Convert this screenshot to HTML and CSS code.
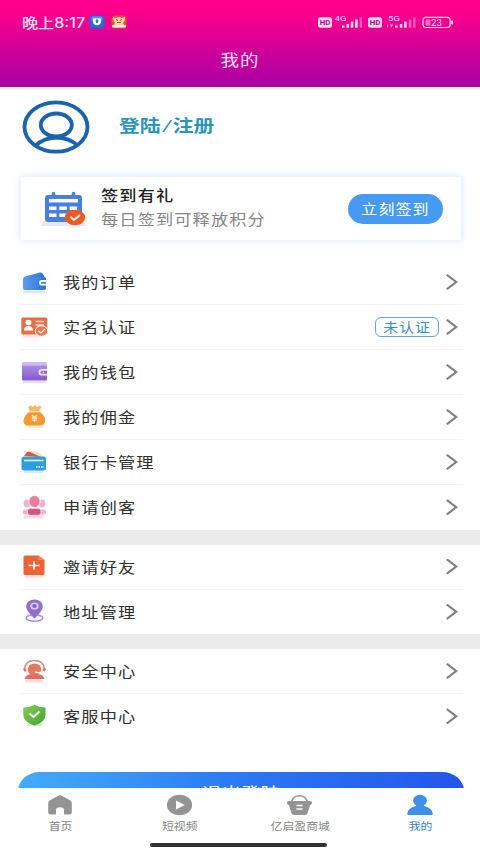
FILE: index.html
```html
<!DOCTYPE html>
<html lang="zh-CN">
<head>
<meta charset="utf-8">
<title>我的</title>
<link rel="stylesheet" href="styles.css">
</head>
<body>
<div class="screen">
  <header class="header">
    <div class="status">
      <div class="status-left">
        <span class="clock">晚上8:17</span>
        <svg class="app" width="16" height="14" viewBox="0 0 16 14"><rect x=".5" y=".5" width="15" height="13" rx="3.5" fill="#2468dc"/><rect x="2.5" y="1.5" width="11" height="5" rx="2" fill="#4aa0f5"/><path d="M4 3.5h8v3a4 3.8 0 0 1-8 0z" fill="#fff"/><path d="M6.8 4.5h2.4v2.2a1.2 1.2 0 0 1-2.4 0z" fill="#2468dc"/></svg>
        <svg class="app" width="16" height="14" viewBox="0 0 16 14"><rect x=".5" y=".5" width="15" height="13" rx="3.5" fill="#e8502f"/><path d="M2 2l3 1 3-1 3 1 3-1-.5 4L12 8l1 2H3l1-2-1.500-2z" fill="#ffd5a8"/><path d="M5 4.500l2 1M11 4.500l-2 1M6 7.500h4" stroke="#c9382c" stroke-width="1"/><rect x="1" y="10" width="14" height="2.500" rx="1" fill="#fff0f0"/></svg>
      </div>
      <svg class="signals" width="138" height="20" viewBox="317 12 138 20">
        <g fill="#ffd9f2">
          <rect x="318" y="17.300" width="14" height="10.400" rx="2.500"/>
          <rect x="368" y="17.300" width="14" height="10.400" rx="2.500"/>
          <rect x="342" y="25.500" width="2.500" height="2.200"/><rect x="346.500" y="24" width="2.500" height="3.700"/><rect x="350.800" y="21.500" width="2.500" height="6.200"/><rect x="355" y="19.500" width="2.700" height="8.200"/><rect x="359.600" y="17.500" width="2.500" height="10.200" opacity=".4"/>
          <rect x="395" y="25.500" width="2.500" height="2.200"/><rect x="399.800" y="24" width="2.500" height="3.700"/><rect x="404.200" y="21.500" width="2.500" height="6.200"/><rect x="408.800" y="19.500" width="2.500" height="8.200" opacity=".45"/><rect x="413" y="17.500" width="2.500" height="10.200" opacity=".4"/>
          <path d="M387 27.500v-3l1.500 1.500M390 24.500h3l-1.500 3z"/>
          <rect x="425.500" y="19.500" width="5" height="6" rx="1" opacity=".5"/>
          <rect x="451.300" y="20.500" width="1.700" height="4" rx=".8"/>
          <text x="334.500" y="21" font-size="8" textLength="12" lengthAdjust="spacingAndGlyphs">4G</text>
          <text x="388" y="21" font-size="8" textLength="12" lengthAdjust="spacingAndGlyphs">5G</text>
          <text x="431" y="25.700" font-size="8.500" textLength="11" lengthAdjust="spacingAndGlyphs">23</text>
        </g>
        <g fill="#b5008c" font-size="7" font-weight="700"><text x="319.700" y="25.100" textLength="10.600" lengthAdjust="spacingAndGlyphs">HD</text><text x="369.700" y="25.100" textLength="10.600" lengthAdjust="spacingAndGlyphs">HD</text></g>
        <rect x="423" y="17.300" width="27.200" height="10.200" rx="3" fill="none" stroke="#ffd9f2" stroke-width="1.200"/>
      </svg>
    </div>
    <h1 class="title">我的</h1>
  </header>

  <main class="content">
    <section class="profile">
      <svg width="68" height="56" viewBox="22 99 68 56" fill="none" stroke="#1a64ad" stroke-width="3.800"><ellipse cx="56" cy="127" rx="31.500" ry="24.700"/><ellipse cx="56.300" cy="125" rx="15.500" ry="11.500"/><path d="M36 145.500Q43.500 138 56 137.500Q69.500 138 77 145"/></svg>
      <span class="login">登陆<i>/</i>注册</span>
    </section>

    <section class="card">
      <svg width="48" height="42" viewBox="40 188 48 42">
        <path d="M43 221l-2 5h45l-2-5z" fill="#e6e9f5"/>
        <path d="M48 195h31q3 0 3 3v21q0 3-3 3H48q-3 0-3-3v-21q0-3 3-3z" fill="#457fe0"/>
        <path d="M53.500 193.500v4M73.500 193.500v4" stroke="#457fe0" stroke-width="3.500" stroke-linecap="round"/>
        <path d="M49 200.700h29" stroke="#fff" stroke-width="3.500"/>
        <path d="M49 208.200h29M49 215.200h20" stroke="#fff" stroke-width="3.500" stroke-dasharray="7.500 2.800"/>
        <ellipse cx="75" cy="217.500" rx="10.200" ry="7.800" fill="#f0591f"/>
        <path d="M70.500 217l3.500 3 6-5" fill="none" stroke="#fff" stroke-width="2"/>
      </svg>
      <div class="card-text"><b>签到有礼</b><p>每日签到可释放积分</p></div>
      <button class="sign"><span>立刻签到</span></button>
    </section>

    <ul class="menu">
      <li><svg class="ico" viewBox="20 -14 28 28"><defs><linearGradient id="blue" x2="1"><stop stop-color="#5d9bee"/><stop offset="1" stop-color="#2f73d6"/></linearGradient></defs><path d="M23 10h22" stroke="#dce6fa" stroke-width="3"/><path d="M23-3Q23-5 25-5.500L40-9.500Q42-10 43-8L44.500-5 46-4V6Q46 8 44 8H25Q23 8 23 6z" fill="url(#blue)"/><path d="M46-2h-4a3 2.700 0 0 0 0 5.400h4z" fill="#fff"/><path d="M46 0h-4a1 .9 0 0 0 0 1.800h4z" fill="#3b7cdd"/></svg><span>我的订单</span><em></em></li>
      <li><svg class="ico" viewBox="20 -14 28 28"><path d="M23 9h16" stroke="#fbe1d8" stroke-width="3"/><rect x="21.300" y="-9.500" width="26" height="17" rx="1.500" fill="#df7048"/><ellipse cx="28.500" cy="-4.500" rx="3" ry="2.800" fill="#fff"/><path d="M24 3.500q0-4.500 4.500-4.500T33 3.500z" fill="#fff"/><path d="M35.500-5.500h8.500M35.500-2h8.500" stroke="#ffd9c8" stroke-width="1.400"/><ellipse cx="41.500" cy="4" rx="6.300" ry="5.300" fill="#e7794c" stroke="#fff" stroke-width="1"/><path d="M38.500 4l2.500 2 4-4" stroke="#fff" fill="none" stroke-width="1.300"/></svg><span>实名认证</span><strong class="tag"><u>未认证</u></strong><em></em></li>
      <li><svg class="ico" viewBox="20 -14 28 28"><defs><linearGradient id="vio" x2="0" y2="1"><stop stop-color="#aa8ce2"/><stop offset="1" stop-color="#8658cf"/></linearGradient></defs><path d="M23 10h23" stroke="#eadffa" stroke-width="2"/><rect x="22" y="-10" width="25" height="5" rx="1" fill="#cdbdf0"/><rect x="22" y="-6.500" width="25" height="15" rx="1" fill="url(#vio)"/><path d="M47-3h-5a3.200 3 0 0 0 0 6.500h5z" fill="#efe5ff"/><path d="M47-1.300h-5a1.500 1.500 0 0 0 0 3h5z" fill="#925fcc"/><circle cx="43.500" cy=".200" r=".8" fill="#fff"/></svg><span>我的钱包</span><em></em></li>
      <li><svg class="ico" viewBox="20 -14 28 28"><path d="M26 9.500h17" stroke="#fdebcf" stroke-width="3"/><path d="M29-5h11q5 4 5.300 8Q45 8.500 40 8.500H28.500Q23.500 8.500 23.500 3.500 24-1 29-5z" fill="#f09a37"/><path d="M28-10l3-1.500 2 1.500 2-2 2 2 3-1.500 1.500 1.500-3 5h-8z" fill="#f6b963"/><path d="M29-5.300h11" stroke="#fde2ae" stroke-width="1.300"/><path d="M32-2l2.500 2.500L37-2M34.500.500V5M31.800 1h5.400M32 3.200h5" stroke="#ffe8bd" fill="none" stroke-width="1.300"/></svg><span>我的佣金</span><em></em></li>
      <li><svg class="ico" viewBox="20 -14 28 28"><path d="M24 9.500h19" stroke="#d4eefb" stroke-width="3"/><path d="M29-11q13-1 15 7H33z" fill="#fae0d3"/><path d="M24-6l3-4q1-.8 3 0l11 5z" fill="#dd5b3c"/><rect x="21.500" y="-5.500" width="24.500" height="14" rx="2.500" fill="#2f9ee0"/><path d="M24-1.500h19.500" stroke="#d8f3ff" stroke-width="1.600"/><path d="M36 5h8" stroke="#fff" stroke-width="1.400" stroke-dasharray="1.500 1"/></svg><span>银行卡管理</span><em></em></li>
      <li><svg class="ico" viewBox="20 -14 28 28"><path d="M24 10h20" stroke="#f8dbe5" stroke-width="3"/><g fill="#f0b4c6"><ellipse cx="27" cy="-3.500" rx="3.300" ry="4"/><ellipse cx="42" cy="-3.500" rx="3.300" ry="4"/><rect x="23" y="2.500" width="7" height="5" rx="2"/><rect x="39" y="2.500" width="7" height="5" rx="2"/></g><ellipse cx="34.500" cy="-5.500" rx="5.600" ry="6" fill="#ec7e9b" stroke="#fff" stroke-width=".7"/><rect x="27.500" y="1.300" width="13.500" height="7" rx="2.800" fill="#da4f86" stroke="#fff" stroke-width=".7"/></svg><span>申请创客</span><em></em></li>
    </ul>
    <ul class="menu">
      <li><svg class="ico" viewBox="20 -14 28 28"><path d="M25 9.500h18" stroke="#fbe0d6" stroke-width="2.500"/><path d="M25-11.500h13.500l6 4.500V6.500q0 1.500-1.500 1.500H25q-1.500 0-1.500-1.500V-10q0-1.500 1.500-1.500z" fill="#ea6437"/><path d="M38.500-11.500l6 4.500h-6z" fill="#f08a5e"/><path d="M34-5.500v8M28.500-1.500h11" stroke="#fff" stroke-width="1.700"/></svg><span>邀请好友</span><em></em></li>
      <li><svg class="ico" viewBox="20 -14 28 28"><ellipse cx="34.500" cy="6" rx="8.300" ry="3.200" fill="none" stroke="#a48fe0" stroke-width="1.600"/><path d="M34.500-12.500c5 0 8.300 3 8.300 7 0 4-5 8.500-8.300 12-3.300-3.500-8.300-8-8.300-12 0-4 3.300-7 8.300-7z" fill="#926fcd"/><ellipse cx="34.500" cy="-6" rx="4.200" ry="3.600" fill="#dacdf5"/><ellipse cx="34.500" cy="-6" rx="2.300" ry="2" fill="#8961c6"/></svg><span>地址管理</span><em></em></li>
    </ul>
    <ul class="menu last">
      <li><svg class="ico" viewBox="20 -14 28 28"><path d="M25 10h18" stroke="#fae0dd" stroke-width="3"/><path d="M24.500-1.500Q25-10.500 34.500-10.500T44.500-1.500" fill="none" stroke="#db8a79" stroke-width="1.700"/><ellipse cx="34.500" cy="-1.500" rx="6.700" ry="6" fill="#e07a5c"/><path d="M24.500 8q1-4.500 7-5h6q6 .5 7 5z" fill="#e46a68"/><path d="M22.800-2.500h3.500v3h-2zM46.200-2.500h-3.500v3h2z" fill="#d97965"/><path d="M44 .5q-3 2-9 .5" stroke="#fff" stroke-width="1.300" fill="none"/></svg><span>安全中心</span><em></em></li>
      <li><svg class="ico" viewBox="20 -14 28 28"><defs><linearGradient id="grn" x2="1" y2="1"><stop stop-color="#84ce58"/><stop offset="1" stop-color="#43a32e"/></linearGradient></defs><path d="M27 8.500h15" stroke="#d9f0cf" stroke-width="3"/><path d="M34.500-11.500Q39-8.500 45.500-8.500V-1q0 7-11 10.500Q23.300 6 23.300-1v-7.500Q30-8.500 34.500-11.500z" fill="url(#grn)"/><path d="M29.500-2.500l4 3.500 6-5.500" stroke="#fff" stroke-width="2" fill="none"/></svg><span>客服中心</span><em></em></li>
    </ul>
    <button class="logout"><span>退出登陆</span></button>
  </main>

  <nav class="tabs">
    <a><svg width="28" height="24" viewBox="0 0 28 24"><path d="M12.300 1.700Q14 .8 15.700 1.700L24 6.300Q25.800 7.300 25.800 9V18q0 2.500-2.500 2.500H18V16q0-2.800-4-2.800T10 16v4.500H4.700Q2.200 20.500 2.200 18V9Q2.200 7.300 4 6.300z" fill="#949494"/></svg><span>首页</span></a>
    <a><svg width="28" height="24" viewBox="0 0 28 24"><ellipse cx="13.500" cy="11" rx="12.600" ry="10.200" fill="#949494"/><path d="M10 6.500L18.800 11 10 15.500z" fill="#fff"/></svg><span>短视频</span></a>
    <a><svg width="28" height="24" viewBox="0 0 28 24"><path d="M5.500 8Q7 1.700 13.500 1.700T21.500 8" fill="none" stroke="#949494" stroke-width="1.500"/><path d="M2.800 7h21.400q2 0 1.800 2t-2 2.300l-2.500 8Q21 21 19.300 21H7.700Q6 21 5.500 19.300L3 11.300Q1 11 .9 9t1.900-2z" fill="#949494"/><path d="M10.500 11.500h6M10.500 15h6" stroke="#fff" stroke-width="1.500"/></svg><span>亿启盈商城</span></a>
    <a class="on"><svg width="28" height="24" viewBox="0 0 28 24"><ellipse cx="14" cy="6.500" rx="6.900" ry="5.700" fill="#3d8fe8"/><path d="M10 10h8v2q8.500 2 8.800 8 0 1-1 1H2.200q-1 0-1-1 .3-6 8.800-8z" fill="#3d8fe8"/></svg><span>我的</span></a>
    <div class="home"></div>
  </nav>
</div>
</body>
</html>
```
FILE: styles.css
```css
* { box-sizing: border-box; }
body, h1, p, ul { margin: 0; padding: 0; }
body {
  font-family: "Noto Sans", "Noto Sans CJK SC", sans-serif;
  background: #fff;
  color: #2e2e2e;
}
svg { display: block; flex: none; }
svg text { font-family: Roboto, sans-serif; }
button { border: 0; font-family: inherit; padding: 0; }

.screen {
  width: 480px;
  height: 853px;
  display: flex;
  flex-direction: column;
  overflow: hidden;
}

.header {
  height: 87px;
  flex: none;
  background: linear-gradient(#ff008c 0%, #fa008d 15%, #a800a4 100%);
  color: #ffe0f5;
}
.status {
  height: 32px;
  padding: 12px 25px 0 22px;
  display: flex;
  justify-content: space-between;
}
.status-left { display: flex; align-items: center; height: 20px; }
.clock {
  width: 67px;
  font-size: 14px;
  font-weight: 500;
  line-height: 20px;
  white-space: nowrap;
  font-family: Inter, "Noto Sans CJK SC", sans-serif;
  transform: translateY(1px) scaleX(1.15);
  transform-origin: left;
}
.app { margin-right: 6px; }
.title {
  margin-top: 16px;
  text-align: center;
  font-size: 16px;
  line-height: 24px;
  font-weight: 400;
  letter-spacing: 1px;
  transform: scaleX(1.15);
}

.content { flex: 1; min-height: 0; overflow: hidden; }
.profile {
  height: 90px;
  padding: 12px 0 0 22px;
  display: flex;
}
.login {
  margin: 14px 0 0 29px;
  height: 26px;
  line-height: 26px;
  font-size: 17px;
  font-weight: 700;
  color: #2b94bd;
  white-space: nowrap;
  transform: scaleX(1.22);
  transform-origin: left;
}
.login i { font-weight: 400; padding: 0 2px; }

.card {
  height: 63px;
  margin: 0 19px 20px 21px;
  padding: 0 18px 0 19px;
  display: flex;
  align-items: center;
  box-shadow: 0 0 8px 1px #dfebfa;
}
.card-text { flex: 1; margin: -3px 0 0 13px; }
.card-text b, .card-text p {
  display: block;
  white-space: nowrap;
  letter-spacing: 1px;
  transform: scaleX(1.145);
  transform-origin: left;
  font-size: 15px;
  line-height: 24px;
}
.card-text b { font-weight: 500; color: #222; }
.card-text p { color: #858585; }
.sign {
  width: 95px;
  height: 30px;
  border-radius: 15px;
  background: #479af3;
  color: #fff;
  font-size: 14px;
}
.sign span {
  display: block;
  margin-top: -2px;
  letter-spacing: 1px;
  transform: scaleX(1.14);
}

.menu { list-style: none; border-bottom: 15px solid #ebebeb; }
.menu li {
  height: 45px;
  margin: 0 17px 0 20px;
  padding-right: 5px;
  display: flex;
  align-items: center;
  border-bottom: 1px solid #f3f3f3;
}
.menu li:last-child { height: 44.500px; border-bottom: 0; }
.ico { width: 28px; height: 28px; }
.menu span {
  flex: 1;
  margin-left: 15px;
  font-size: 15px;
  line-height: 24px;
  letter-spacing: 1px;
  white-space: nowrap;
  transform: scaleX(1.145);
  transform-origin: left;
}
.menu em {
  width: 12px;
  height: 16px;
  background: #808080;
  clip-path: polygon(0 1.500px, 1.500px 0, 12px 8px, 1.500px 16px, 0 14.500px, 8.500px 8px);
}
.tag {
  width: 64px;
  height: 20px;
  margin-right: 7px;
  border: 1px solid #65a5cc;
  border-radius: 6px;
  color: #3c8fc2;
  font-size: 13px;
  font-weight: 400;
  line-height: 18px;
  text-align: center;
  white-space: nowrap;
}
.tag u { display: block; text-decoration: none; letter-spacing: .8px; transform: scaleX(1.15); }
.menu.last { border-bottom: 0; }

.logout {
  display: block;
  width: 446px;
  height: 44px;
  margin: 33px 0 0 18px;
  border-radius: 22px / 19px;
  background: linear-gradient(90deg, #43acfb, #2b78f5 50%, #2355eb);
  color: #fff;
  font-size: 17px;
}
.logout span { display: block; margin-top: -2px; transform: scaleX(1.15); }

.tabs {
  height: 65px;
  flex: none;
  background: #fff;
  display: grid;
  grid-template-columns: repeat(4, 120px);
  grid-template-rows: 55px 4px;
  color: #858585;
}
.tabs a {
  display: flex;
  flex-direction: column;
  align-items: center;
  padding-top: 6px;
  font-size: 10.500px;
  line-height: 17px;
}
.tabs span { transform: scaleX(1.13); }
.tabs .on { color: #3486cc; }
.home {
  grid-column: 1 / -1;
  justify-self: center;
  width: 177px;
  height: 4px;
  margin-right: 3px;
  border-radius: 2px;
  background: #333;
}
```
